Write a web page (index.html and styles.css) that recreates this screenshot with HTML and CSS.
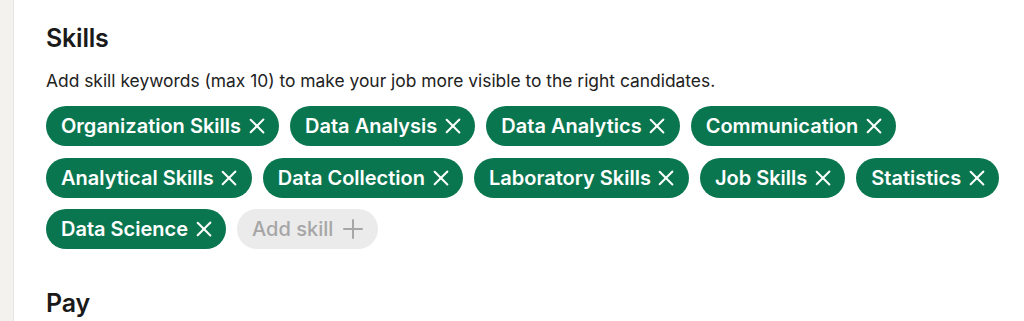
FILE: index.html
```html
<!DOCTYPE html>
<html>
<head>
    <meta charset="utf-8" />
    <title>Skills</title>
    <link rel="stylesheet" href="styles.css">
</head>
<body>
<div class="page">
    <div class="rail"></div>
    <div class="main">
        <h2 class="title">Skills</h2>
        <p class="desc">Add skill keywords (max 10) to make your job more visible to the right candidates.</p>
        <ul class="chips">
            <li class="chip">Organization Skills <span class="x"></span></li>
            <li class="chip">Data Analysis <span class="x"></span></li>
            <li class="chip">Data Analytics <span class="x"></span></li>
            <li class="chip">Communication <span class="x"></span></li>
            <li class="chip">Analytical Skills <span class="x"></span></li>
            <li class="chip">Data Collection <span class="x"></span></li>
            <li class="chip">Laboratory Skills <span class="x"></span></li>
            <li class="chip">Job Skills <span class="x"></span></li>
            <li class="chip">Statistics <span class="x"></span></li>
            <li class="chip">Data Science <span class="x"></span></li>
            <li class="chip add">Add skill <span class="plus"></span></li>
        </ul>
        <h2 class="title pay">Pay</h2>
    </div>
</div>
</body>
</html>
```

FILE: styles.css
```css
html,body,h2,p,ul,li{padding:0; margin:0; border:0;}
ul{list-style:none;}
html,body{width:100%;height:100%;overflow:hidden;}
body{font-family:Inter,'Liberation Sans',Arial,sans-serif;color:#1a1a1a;background:#fff;}

.page{
    display:flex;
    height:100%;
}
.rail{
    width:13px;
    flex:none;
    background-color:#f3f2ef;
    border-right:1px solid #e6e5e2;
}
.main{
    flex:1;
    padding:22px 0 0 32px;
}
.title{
    font-size:25px;
    line-height:32px;
    font-weight:600;
    letter-spacing:-.2px;
}
.desc{
    margin-top:15px;
    font-size:17.4px;
    line-height:24px;
    color:#222;
}
.chips{
    display:flex;
    flex-wrap:wrap;
    column-gap:11px;
    row-gap:11.5px;
    margin-top:13px;
    width:970px;
}
.chip{
    display:flex;
    align-items:center;
    height:40px;
    padding:0 14px 0 15px;
    border-radius:20px;
    background-color:#0a7650;
    color:#fff;
    font-size:20px;
    font-weight:600;
    white-space:pre;
}
.chip .x,
.chip .plus{
    position:relative;
    width:17px;
    height:17px;
    margin-left:2px;
}
.chip .x:before,
.chip .x:after,
.chip .plus:before,
.chip .plus:after{
    content:"";
    position:absolute;
    left:7.5px;
    top:-1.5px;
    width:2.2px;
    height:20px;
    background-color:#fff;
    border-radius:1px;
    transform:rotate(45deg);
}
.chip .x:after{transform:rotate(-45deg);}
.chip.add{
    background-color:#ebebeb;
    color:#a6a6a6;
    font-weight:500;
    padding:0 16px 0 15px;
}
.chip .plus{margin-left:6px;}
.chip .plus:before,
.chip .plus:after{
    background-color:#a6a6a6;
    transform:none;
    width:2px;
}
.chip .plus:after{transform:rotate(90deg);}
.pay{
    margin-top:38px;
}
```
